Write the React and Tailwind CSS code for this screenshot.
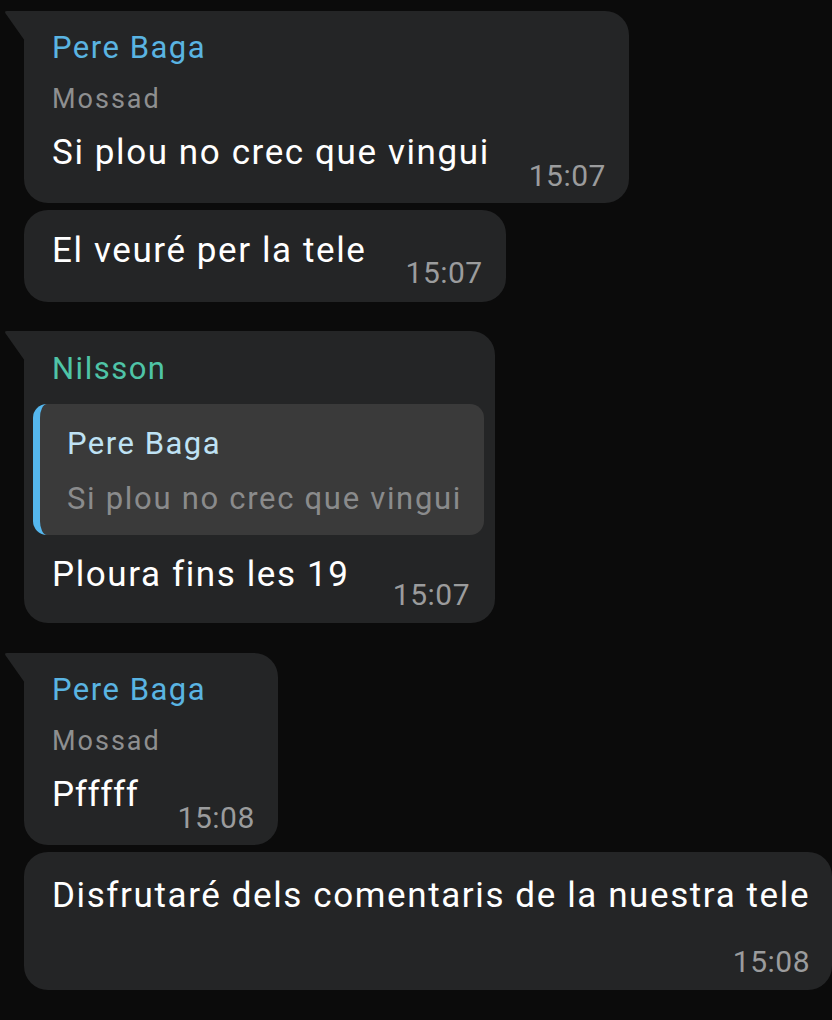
const FONT = { fontFamily: 'Roboto, "Noto Sans", sans-serif' }

function Tail() {
  return (
    <svg className="absolute -left-[20px] top-0" width="21" height="30" viewBox="0 0 21 30">
      <path d="M21 0 H3 Q0 0 1.6 2.4 L21 30 Z" fill="#242526" />
    </svg>
  )
}

function Time({ children, className = '' }) {
  return <span className={`text-[30px] leading-[36px] tracking-[0.5px] text-[#9b9c9d] whitespace-nowrap ${className}`}>{children}</span>
}

function Bubble({ tail, className = '', children }) {
  return (
    <div className={`relative w-fit bg-[#242526] rounded-[24px] ${tail ? 'rounded-tl-none' : ''} ${className}`}>
      {tail && <Tail />}
      {children}
    </div>
  )
}

function Name({ color, children }) {
  return <div className={`text-[31px] leading-[44px] tracking-[1.5px] ${color}`}>{children}</div>
}

function Sub({ children }) {
  return <div className="text-[27px] leading-[44px] tracking-[2px] text-[#8e8f90] mt-[7px]">{children}</div>
}

function Line({ text, time, mb = 'mb-[19px]', track = 'tracking-[1.6px]' }) {
  return (
    <div className="flex items-end justify-between gap-[39px]">
      <span className={`text-[35px] leading-[44px] text-white whitespace-nowrap ${track} ${mb}`}>{text}</span>
      <Time>{time}</Time>
    </div>
  )
}

export default function App() {
  return (
    <div style={FONT} className="w-[832px] h-[1020px] bg-[#0b0b0b] pt-[11px] pl-[24px] overflow-hidden">
      {/* Pere Baga group */}
      <Bubble tail className="pl-[28px] pr-[23px] pt-[15px] pb-[9px]">
        <Name color="text-[#5ab4e2]">Pere Baga</Name>
        <Sub>Mossad</Sub>
        <div className="mt-[10px]">
          <Line text="Si plou no crec que vingui" time="15:07" />
        </div>
      </Bubble>
      <Bubble className="mt-[7px] pl-[28px] pr-[23px] pt-[19px] pb-[11px]">
        <Line text="El veuré per la tele" time="15:07" mb="mb-[18px]" />
      </Bubble>

      {/* Nilsson reply */}
      <Bubble tail className="mt-[29px] pl-[9px] pr-[11px] pt-[16px] pb-[10px]">
        <div className="pl-[19px]">
          <Name color="text-[#4fc4a7]">Nilsson</Name>
        </div>
        <div className="mt-[13px] bg-[#3a3a3a] rounded-[14px] border-l-[7px] border-[#55b7ee] pl-[27px] pr-[22px] pt-[18px] pb-[14px]">
          <div className="text-[31px] leading-[44px] tracking-[1.5px] text-[#bfe2f4]">Pere Baga</div>
          <div className="text-[31px] leading-[44px] tracking-[1.7px] text-[#8a8b8c] mt-[11px] whitespace-nowrap">Si plou no crec que vingui</div>
        </div>
        <div className="pl-[19px] pr-[14px] mt-[18px]">
          <Line text="Ploura fins les 19" time="15:07" mb="mb-[16px]" />
        </div>
      </Bubble>

      {/* Pere Baga again */}
      <Bubble tail className="mt-[30px] pl-[28px] pr-[23px] pt-[15px] pb-[9px]">
        <Name color="text-[#5ab4e2]">Pere Baga</Name>
        <Sub>Mossad</Sub>
        <div className="mt-[10px]">
          <Line text="Pfffff" time="15:08" track="tracking-[0.6px]" />
        </div>
      </Bubble>
      <Bubble className="mt-[7px] pl-[28px] pr-[22px] pt-[22px] pb-[10px] flex flex-col">
        <span className="text-[35px] leading-[44px] tracking-[1.6px] text-white whitespace-nowrap">Disfrutaré dels comentaris de la nuestra tele</span>
        <Time className="self-end mt-[26px]">15:08</Time>
      </Bubble>
    </div>
  )
}
